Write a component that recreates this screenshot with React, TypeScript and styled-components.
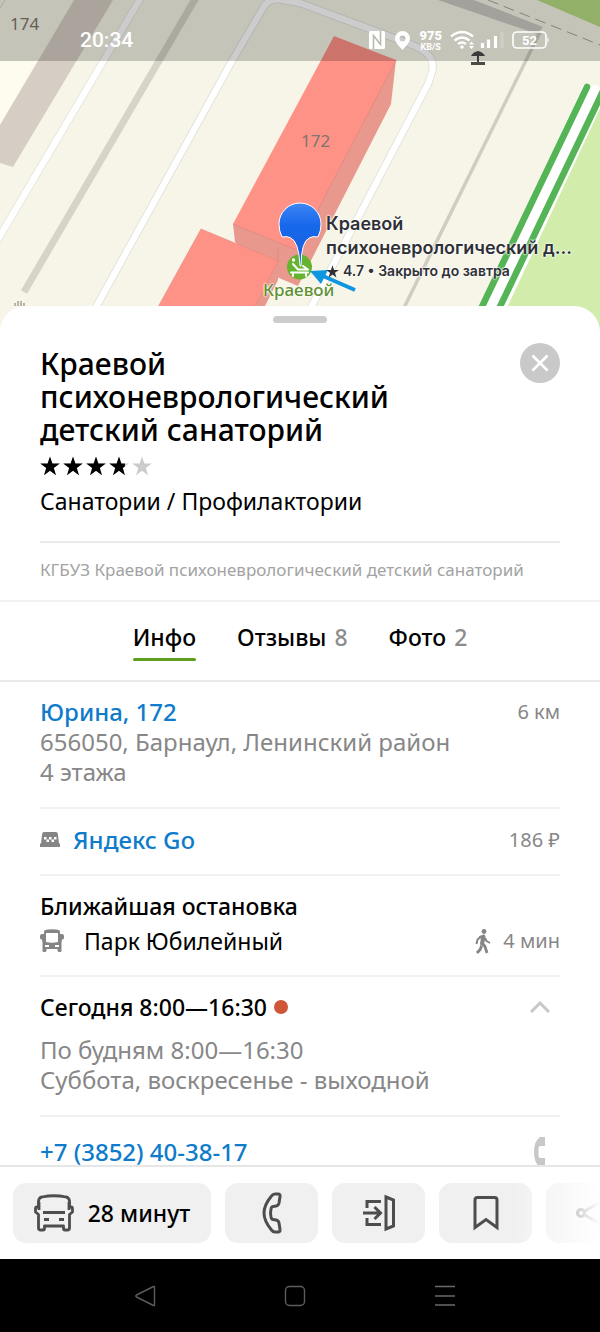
import React from "react";
import styled, { createGlobalStyle } from "styled-components";

const GlobalStyle = createGlobalStyle`
  * { box-sizing: border-box; }
  body {
    margin: 0;
    background: #fff;
    color: #000;
    font-family: "Noto Sans", "Open Sans", sans-serif;
  }
  button { font: inherit; color: inherit; border: 0; padding: 0; background: none; cursor: pointer; }
  a { color: inherit; text-decoration: none; }
  svg { display: block; flex: none; }
  h1, h2, p { margin: 0; }
`;

const Screen = styled.div`
  display: flex;
  flex-direction: column;
  height: 100vh;
  overflow: hidden;
`;

/* ---------- map ---------- */

const MapArea = styled.section`
  position: relative;
  flex: none;
  height: 336px;
  background: #f7f5e8;
  overflow: hidden;
`;

const MapDrawing = styled.svg`
  width: 100%;
  height: 100%;
`;

const StatusBar = styled.header`
  position: absolute;
  inset: 0 0 auto;
  height: 61px;
  padding: 20px 50px 0 80px;
  display: flex;
  justify-content: space-between;
  background: rgba(0, 0, 0, 0.2);
  color: #fff;
`;

const Clock = styled.time`
  font-family: Roboto, sans-serif;
  font-weight: 500;
  font-size: 21px;
  line-height: 41px;
`;

const StatusIcons = styled.div`
  display: flex;
  align-items: center;
  gap: 8px;
  height: 40px;
`;

const Speed = styled.div`
  display: flex;
  flex-direction: column;
  align-items: center;
  font: 700 9px/10px Roboto, sans-serif;
  b { font-size: 13px; line-height: 13px; }
`;

const HouseNumber = styled.span<{ $x: number; $y: number }>`
  position: absolute;
  left: calc(50% + ${(p) => p.$x}px);
  top: ${(p) => p.$y}px;
  font-size: 17px;
  line-height: 24px;
  color: #7d766f;
`;

const PoiName = styled.span`
  position: absolute;
  left: calc(50% - 37px);
  top: 278px;
  font-size: 17px;
  line-height: 24px;
  font-weight: 500;
  color: #5f9130;
  text-shadow: 0 0 2px #fff, 0 0 2px #fff, 0 0 2px #fff;
`;

const PinLabel = styled.div`
  position: absolute;
  left: calc(50% + 26px);
  top: 212px;
  width: 256px;
  font-family: Inter, sans-serif;
  font-weight: 600;
  font-size: 18px;
  line-height: 24px;
  color: #2f3035;
  text-shadow: 0 0 2px #fff, 0 0 2px #fff, 0 0 2px #fff;
  white-space: nowrap;
`;

const PinRating = styled.div`
  display: flex;
  align-items: center;
  gap: 4px;
  font-size: 14px;
  line-height: 22px;
`;

/* ---------- place card ---------- */

const Card = styled.main`
  position: relative;
  flex: 1;
  min-height: 0;
  margin-top: -30px;
  padding-top: 10px;
  border-radius: 26px 26px 0 0;
  background: #fff;
  overflow: hidden;
`;

const Handle = styled.div`
  width: 54px;
  height: 7px;
  margin: 0 auto;
  border-radius: 4px;
  background: #ccc;
`;

const CardHead = styled.div`
  display: flex;
  justify-content: space-between;
  align-items: flex-start;
  padding: 20px 40px 0;
`;

const Title = styled.h1`
  max-width: 400px;
  padding-top: 4px;
  font-size: 30px;
  line-height: 33px;
  font-weight: 500;
`;

const CloseButton = styled.button`
  display: grid;
  place-items: center;
  width: 40px;
  height: 40px;
  border-radius: 50%;
  background: #c9c9c9;
`;

const Stars = styled.div`
  display: flex;
  gap: 3px;
  height: 20px;
  margin: 10px 40px 0;
`;

const Category = styled.p`
  margin: 0 40px;
  padding: 9px 0 24px;
  border-bottom: 2px solid #ebebeb;
  font-size: 23px;
  line-height: 32px;
`;

const LegalName = styled.p`
  padding: 14px 40px 18px;
  font-size: 17px;
  line-height: 25px;
  color: #a3a3a3;
`;

const Tabs = styled.nav`
  display: flex;
  justify-content: center;
  gap: 41px;
  padding-top: 20px;
  height: 82px;
  border-top: 2px solid #f1f1f1;
  border-bottom: 2px solid #e9e9e9;
`;

const Tab = styled.button<{ $active?: boolean }>`
  display: flex;
  flex-direction: column;
  gap: 5px;
  height: 39px;
  font-size: 23px;
  line-height: 31px;
  font-weight: 500;
  &::after {
    content: "";
    width: 100%;
    height: 3px;
    border-radius: 2px;
    background: ${(p) => (p.$active ? "#5f9f20" : "transparent")};
  }
`;

const Count = styled.span`
  margin-left: 2px;
  color: #8c8c8c;
`;

const Row = styled.section<{ $top: number; $bottom: number }>`
  margin: 0 40px;
  padding: ${(p) => p.$top}px 0 ${(p) => p.$bottom}px;
  border-bottom: 2px solid #f1f1f1;
`;

const Line = styled.div<{ $gap?: number; $top?: number }>`
  display: flex;
  align-items: center;
  gap: ${(p) => p.$gap ?? 0}px;
  margin-top: ${(p) => p.$top ?? 0}px;
  font-size: 23px;
  line-height: 30px;
`;

const Heading = styled.h2`
  font-size: 23px;
  line-height: 30px;
  font-weight: 500;
`;

const Muted = styled.p<{ $top?: number }>`
  margin-top: ${(p) => p.$top ?? 0}px;
  font-size: 24px;
  line-height: 30px;
  color: #878787;
`;

const Side = styled.span`
  display: flex;
  align-items: center;
  gap: 12px;
  margin-left: auto;
  font-size: 20px;
  color: #878787;
`;

const BlueLink = styled.a`
  color: #0e7bcb;
  font-size: 24px;
  font-weight: 500;
`;

const ClosedDot = styled.span`
  width: 14px;
  height: 14px;
  border-radius: 50%;
  background: #cf5638;
`;

const ToggleButton = styled.button`
  margin-left: auto;
  width: 40px;
  display: grid;
  place-items: center;
`;

const CallLink = styled.a`
  margin: 0 12px 0 auto;
`;

/* ---------- bottom bars ---------- */

const ActionBar = styled.footer`
  position: relative;
  flex: none;
  display: flex;
  gap: 14px;
  height: 94px;
  padding: 16px 0 16px 13px;
  border-top: 2px solid #e6e6e6;
  background: #fff;
  overflow: hidden;
  &::after {
    content: "";
    position: absolute;
    inset: 0 0 0 auto;
    width: 90px;
    background: linear-gradient(to right, rgba(255, 255, 255, 0), #fff);
    pointer-events: none;
  }
`;

const ActionButton = styled.button<{ $wide?: boolean }>`
  flex: none;
  display: flex;
  align-items: center;
  justify-content: center;
  gap: 14px;
  width: ${(p) => (p.$wide ? 198 : 93)}px;
  height: 60px;
  border-radius: 13px;
  background: #f0f0f0;
  font-size: 23px;
  font-weight: 500;
`;

const SystemNav = styled.nav`
  flex: none;
  display: flex;
  justify-content: center;
  align-items: center;
  gap: 126px;
  height: 73px;
  padding-right: 10px;
  background: #000;
`;

const STAR = "M10 0.5 12.4 7.6H19.8L13.8 12 16 19.2 10 14.8 4 19.2 6.2 12 0.2 7.6H7.6Z";

const Star = ({ fill }: { fill: number }) => (
  <svg width="20" height="20" viewBox="0 0 20 20">
    <path d={STAR} fill="#ccc" />
    <path d={STAR} fill="#000" style={{ clipPath: `inset(0 ${100 - fill}% 0 0)` }} />
  </svg>
);

const CityMap = () => (
  <MapDrawing viewBox="0 0 600 336" preserveAspectRatio="xMidYMin slice" aria-hidden="true">
    <defs>
      <linearGradient id="pinBlue" x1="0" y1="0" x2="0" y2="1">
        <stop offset="0" stopColor="#3f86f5" />
        <stop offset=".35" stopColor="#1768ea" />
        <stop offset="1" stopColor="#1560e0" />
      </linearGradient>
    </defs>
    <rect width="600" height="336" fill="#f7f5e8" />
    <path d="M0 0H74L0 125Z" fill="#fefcee" />
    <path d="M0 0H74L38 61H0Z" fill="#f7f5e8" />
    <path d="M0 8 5 0" stroke="#d6d4c8" strokeWidth="1" />
    <path d="M74 0H113L13 167 0 163V125Z" fill="#d6cec5" />
    <g fill="none" strokeLinejoin="round">
      <path d="M143 -6-6 246" stroke="#e3e2dc" strokeWidth="8" />
      <path d="M143 -6-6 246" stroke="#fff" strokeWidth="6.4" />
      <path d="M198 -6 24 292" stroke="#d6d4c8" strokeWidth="7" />
      <path d="M80 336 232 61 263 8Q268 -1 278 -1L300 3 386 35 410 44Q437 54 432 72L428 84 296 336" stroke="#dfdedb" strokeWidth="8" />
      <path d="M80 336 232 61 263 8Q268 -1 278 -1L300 3 386 35 410 44Q437 54 432 72L428 84 296 336" stroke="#fff" strokeWidth="6.4" />
      <path d="M540 32 396 324" stroke="#cfcdc3" strokeWidth="3.5" />
    </g>
    <path d="M438 0H474L543 27 537 34Z" fill="#cccac3" />
    <path d="M488 0 600 45" stroke="#a5a49c" strokeWidth="1" strokeDasharray="11 6" />
    <path d="M537 0H600V27Z" fill="#b8dd83" />
    <path d="M608 86 492 336H608Z" fill="#d2edab" />
    <path d="M595 90 480 336" stroke="#fff" strokeWidth="25" />
    <path d="M595 90 480 336" stroke="#fff" strokeWidth="10" strokeLinecap="round" />
    <path d="M587 87 468 336M604 89 486 336" stroke="#55b556" strokeWidth="6.5" strokeLinecap="round" />

    <path d="M396 60 391 104 298 286 279 278 235 242 233 224Z" fill="#e8988c" />
    <path d="M334 36 396 60 297 250 233 224Z" fill="#ff9287" />
    <path d="M396 60 297 250 233 224" fill="none" stroke="#d9877d" strokeWidth=".7" />
    <path d="M278 261V280L250 336H220Z" fill="#e8988c" />
    <path d="M201 229 278 261 240 336H142Z" fill="#ff9287" stroke="#e8877d" strokeWidth=".6" />
    <path d="M278 247V261" stroke="#d9877d" strokeWidth=".7" />

    <path d="M471 56Q473 52 478 51 483 52 485 56ZM477 55H479V62H477ZM471 62H485V65H471Z" fill="#4a4a48" />
    <path d="M15 306V303M18 306V301M21 306V301M24 306V303" stroke="#77756e" strokeWidth="1" />

    <circle cx="299.500" cy="267" r="12.500" fill="#65b32e" />
    <circle cx="293.500" cy="260" r="1.700" fill="#fff" />
    <g fill="none" stroke="#fff" strokeWidth="2" strokeLinecap="round" strokeLinejoin="round">
      <path d="M293 264 298 269.500H308L303 266M291 272.500H308M293 273V276M306 273V276" />
    </g>
    <path
      d="M300 266Q299 241 290 237.500Q286 236 282 237Q279 231 279 224A21 21 0 0 1 321 224Q321 231 318 237Q314 236 310 237.500Q301 241 301 266Z"
      fill="url(#pinBlue)"
      stroke="#fff"
      strokeWidth="1"
    />
    <path d="M355 290 323 276" stroke="#1096e0" strokeWidth="4" />
    <path d="M310 271 328 270 321 284Z" fill="#1096e0" />
  </MapDrawing>
);

const BusSmall = () => (
  <svg width="24" height="24" viewBox="0 0 24 24" fill="#858585">
    <path
      fillRule="evenodd"
      d="M5 1Q12-.5 19 1 20 1.500 20 3V5H22Q24 5 24 7V9Q24 10.500 22 10.500L21.500 14V22Q21.500 23 20 23H19Q17.500 23 17.500 21V20H6.500V21Q6.500 23 5 23H4Q2.500 23 2.500 22V14L2 10.500Q0 10.500 0 9V7Q0 5 2 5H4V3Q4 1.500 5 1ZM6 4V13Q12 14.500 18 13V4ZM5 16V18H9V16ZM15 16V18H19V16Z"
    />
  </svg>
);

const BusLarge = () => (
  <svg width="40" height="38" viewBox="0 0 40 38" fill="none" stroke="#4d4d4d" strokeWidth="2.800" strokeLinejoin="round">
    <path d="M4.500 13V7Q5 3.500 8 3Q20 .5 32 3 35 3.500 35.500 7V13H37Q38.500 13 38.500 15V18L35.500 20.500V34Q35.500 36 33.500 36H31Q29.500 36 29.500 34.500V32H10.500V34.500Q10.500 36 9 36H6.500Q4.500 36 4.500 34V20.500L1.500 18V15Q1.500 13 3 13Z" />
    <path d="M9 18.500H31M10 25.500H15M25 25.500H30M5 8V16M35 8V16" />
  </svg>
);

export default function App() {
  return (
    <Screen>
      <GlobalStyle />
      <MapArea>
        <CityMap />
        <HouseNumber $x={-290} $y={12}>174</HouseNumber>
        <HouseNumber $x={1} $y={129}>172</HouseNumber>
        <PoiName>Краевой</PoiName>
        <PinLabel>
          <div>Краевой</div>
          <div>психоневрологический д...</div>
          <PinRating>
            <svg width="13" height="13" viewBox="0 0 20 20"><path d={STAR} fill="#2f3035" /></svg>
            <span>4.7 • Закрыто до завтра</span>
          </PinRating>
        </PinLabel>
        <StatusBar>
          <Clock>20:34</Clock>
          <StatusIcons>
            <svg width="18" height="18" viewBox="0 0 18 18">
              <rect x="1" y="0" width="16" height="18" rx="1.500" fill="#fff" />
              <path d="M5.500 18V4.500L12.500 13.500V0" fill="none" stroke="#b9b8ae" strokeWidth="1.600" />
            </svg>
            <svg width="17" height="19" viewBox="0 0 17 19">
              <path fillRule="evenodd" fill="#fff" d="M8.500 0A7.500 7.500 0 0 1 16 7.500C16 12 11 16 8.500 19 6 16 1 12 1 7.500A7.500 7.500 0 0 1 8.500 0ZM8.500 4.500A3 3 0 1 0 8.500 10.500 3 3 0 0 0 8.500 4.500Z" />
            </svg>
            <Speed><b>975</b>KB/S</Speed>
            <svg width="54" height="20" viewBox="0 0 54 20" fill="none" stroke="#fff" strokeWidth="2.400">
              <path d="M1 6.500Q12-2.500 23 6.500M4.500 10.500Q12 4.500 19.500 10.500M8 14Q12 11 16 14" />
              <circle cx="12" cy="17" r="1.800" fill="#fff" stroke="none" />
              <path d="M19 14.500 21.500 11.500 24 14.500ZM19 16 21.500 19 24 16Z" fill="#fff" stroke="none" />
              <path d="M32.500 18V13M38.500 18V9.500M45.500 18V6" strokeWidth="3.200" />
              <path d="M52 18V2" strokeWidth="3.200" opacity=".2" />
            </svg>
            <svg width="38" height="18" viewBox="0 0 38 18">
              <rect x="1" y="1" width="33" height="16" rx="4" fill="none" stroke="#fff" strokeWidth="1.600" />
              <path d="M35.500 6Q38 9 35.500 12Z" fill="#fff" />
              <text x="17.500" y="13.500" textAnchor="middle" fill="#fff" fontFamily="Roboto" fontWeight="700" fontSize="13">52</text>
            </svg>
          </StatusIcons>
        </StatusBar>
      </MapArea>

      <Card>
        <Handle />
        <CardHead>
          <Title>Краевой психоневрологический детский санаторий</Title>
          <CloseButton aria-label="Закрыть">
            <svg width="18" height="18" viewBox="0 0 18 18" stroke="#fff" strokeWidth="2.600">
              <path d="M1.500 1.500 16.500 16.500M16.500 1.500 1.500 16.500" />
            </svg>
          </CloseButton>
        </CardHead>
        <Stars aria-label="4.7">
          {[100, 100, 100, 80, 0].map((fill, i) => <Star key={i} fill={fill} />)}
        </Stars>
        <Category>Санатории / Профилактории</Category>
        <LegalName>КГБУЗ Краевой психоневрологический детский санаторий</LegalName>

        <Tabs>
          <Tab $active>Инфо</Tab>
          <Tab><span>Отзывы <Count>8</Count></span></Tab>
          <Tab><span>Фото <Count>2</Count></span></Tab>
        </Tabs>

        <Row $top={15} $bottom={20}>
          <Line><BlueLink href="#address">Юрина, 172</BlueLink><Side>6 км</Side></Line>
          <Muted>656050, Барнаул, Ленинский район</Muted>
          <Muted>4 этажа</Muted>
        </Row>

        <Row $top={16} $bottom={19}>
          <Line $gap={13}>
            <svg width="20" height="16" viewBox="0 0 20 16">
              <path d="M4 0H16Q17.500 0 17.800 1.500L19 11.500H20V15H0V11.500H1L2.200 1.500Q2.500 0 4 0Z" fill="#858585" />
              <path d="M4 5H6.500V7.500H9V5H11.500V7.500H14V5H16.500V7.500H14V10H11.500V7.500H9V10H6.500V7.500H4Z" fill="#fff" />
            </svg>
            <BlueLink href="#taxi">Яндекс Go</BlueLink>
            <Side>186 ₽</Side>
          </Line>
        </Row>

        <Row $top={15} $bottom={19}>
          <Heading>Ближайшая остановка</Heading>
          <Line $gap={20} $top={5}>
            <BusSmall />
            <span>Парк Юбилейный</span>
            <Side>
              <svg width="16" height="25" viewBox="0 0 16 25" fill="none" stroke="#858585" strokeLinejoin="round">
                <circle cx="9" cy="2.500" r="2.400" fill="#858585" stroke="none" />
                <path d="M5 8 9 6.500 9.500 8 8 15H6L7 9Z" fill="#858585" strokeWidth="2" />
                <path d="M6 7.500 2.500 10.500 1.500 15M10 9 11.500 12 15 14" strokeWidth="2" />
                <path d="M7 14 10 17.500 12 24M6.500 16.500 5.500 20 2 24" strokeWidth="2.800" />
              </svg>
              4 мин
            </Side>
          </Line>
        </Row>

        <Row $top={15} $bottom={20}>
          <Line $gap={7}>
            <Heading>Сегодня 8:00—16:30</Heading>
            <ClosedDot />
            <ToggleButton aria-label="Свернуть">
              <svg width="20" height="12" viewBox="0 0 20 12" fill="none" stroke="#c8c8c8" strokeWidth="3">
                <path d="M1 11 10 2 19 11" />
              </svg>
            </ToggleButton>
          </Line>
          <Muted $top={13}>По будням 8:00—16:30</Muted>
          <Muted>Суббота, воскресенье - выходной</Muted>
        </Row>

        <Row $top={20} $bottom={20}>
          <Line>
            <BlueLink href="tel:+73852403817">+7 (3852) 40-38-17</BlueLink>
            <CallLink href="tel:+73852403817" aria-label="Позвонить">
              <svg width="15" height="30" viewBox="0 0 15 30">
                <path d="M12 0V9H7Q5.500 9 5.500 12V18Q5.500 21 7 21H12V30H7Q1 26 1 15T7 0Z" fill="#c8c8c8" />
              </svg>
            </CallLink>
          </Line>
        </Row>
      </Card>

      <ActionBar>
        <ActionButton $wide><BusLarge />28 минут</ActionButton>
        <ActionButton aria-label="Позвонить">
          <svg width="20" height="42" viewBox="0 0 20 42" fill="none" stroke="#4d4d4d" strokeWidth="3" strokeLinejoin="round">
            <path d="M16 2Q18.500 2 18 4.500L17 11Q16.500 13.500 14 14L11 14.500Q9.500 14.500 9 17Q8 21 9 25Q9.500 27.500 11 27.500L14 28Q16.500 28.500 17 31L18 37.500Q18.500 40 16 40H13Q11 40 9.500 38 2 29 2 21T9.500 4Q11 2 13 2Z" />
          </svg>
        </ActionButton>
        <ActionButton aria-label="Вход">
          <svg width="34" height="38" viewBox="0 0 34 38" fill="none" stroke="#4d4d4d" strokeWidth="3">
            <path d="M19 7.500H5V14M5 24V30.500H19M1 19H18M12.500 13 18.500 19 12.500 25" />
            <path d="M24 3 31.500 6V32L24 35Z" />
          </svg>
        </ActionButton>
        <ActionButton aria-label="Сохранить">
          <svg width="26" height="36" viewBox="0 0 26 36" fill="none" stroke="#4d4d4d" strokeWidth="3">
            <path d="M2 32.500V5Q2 2.500 4.500 2.500H21.500Q24 2.500 24 5V32.500L13 24.500Z" />
          </svg>
        </ActionButton>
        <ActionButton aria-label="Поделиться">
          <svg width="34" height="34" viewBox="0 0 34 34" fill="none" stroke="#4d4d4d" strokeWidth="3">
            <circle cx="5" cy="17" r="3.500" />
            <circle cx="28" cy="4.500" r="3.500" />
            <circle cx="28" cy="29.500" r="3.500" />
            <path d="M8 15.500 25 6M8 18.500 25 28" />
          </svg>
        </ActionButton>
      </ActionBar>

      <SystemNav>
        <button aria-label="Назад">
          <svg width="24" height="24" viewBox="0 0 24 24" fill="none" stroke="#5c5c5c" strokeWidth="1.400" strokeLinejoin="round">
            <path d="M21.500 3V21Q21.500 22 20.500 21.500L3.500 13Q2 12 3.500 11L20.500 2.500Q21.500 2 21.500 3Z" />
          </svg>
        </button>
        <button aria-label="Домой">
          <svg width="24" height="24" viewBox="0 0 24 24" fill="none" stroke="#5c5c5c" strokeWidth="1.400">
            <rect x="2.500" y="2.500" width="19" height="19" rx="4" />
          </svg>
        </button>
        <button aria-label="Недавние">
          <svg width="24" height="24" viewBox="0 0 24 24" stroke="#6a6a6a" strokeWidth="1.400">
            <path d="M2 2.500H22M2 12H22M2 21H22" />
          </svg>
        </button>
      </SystemNav>
    </Screen>
  );
}
